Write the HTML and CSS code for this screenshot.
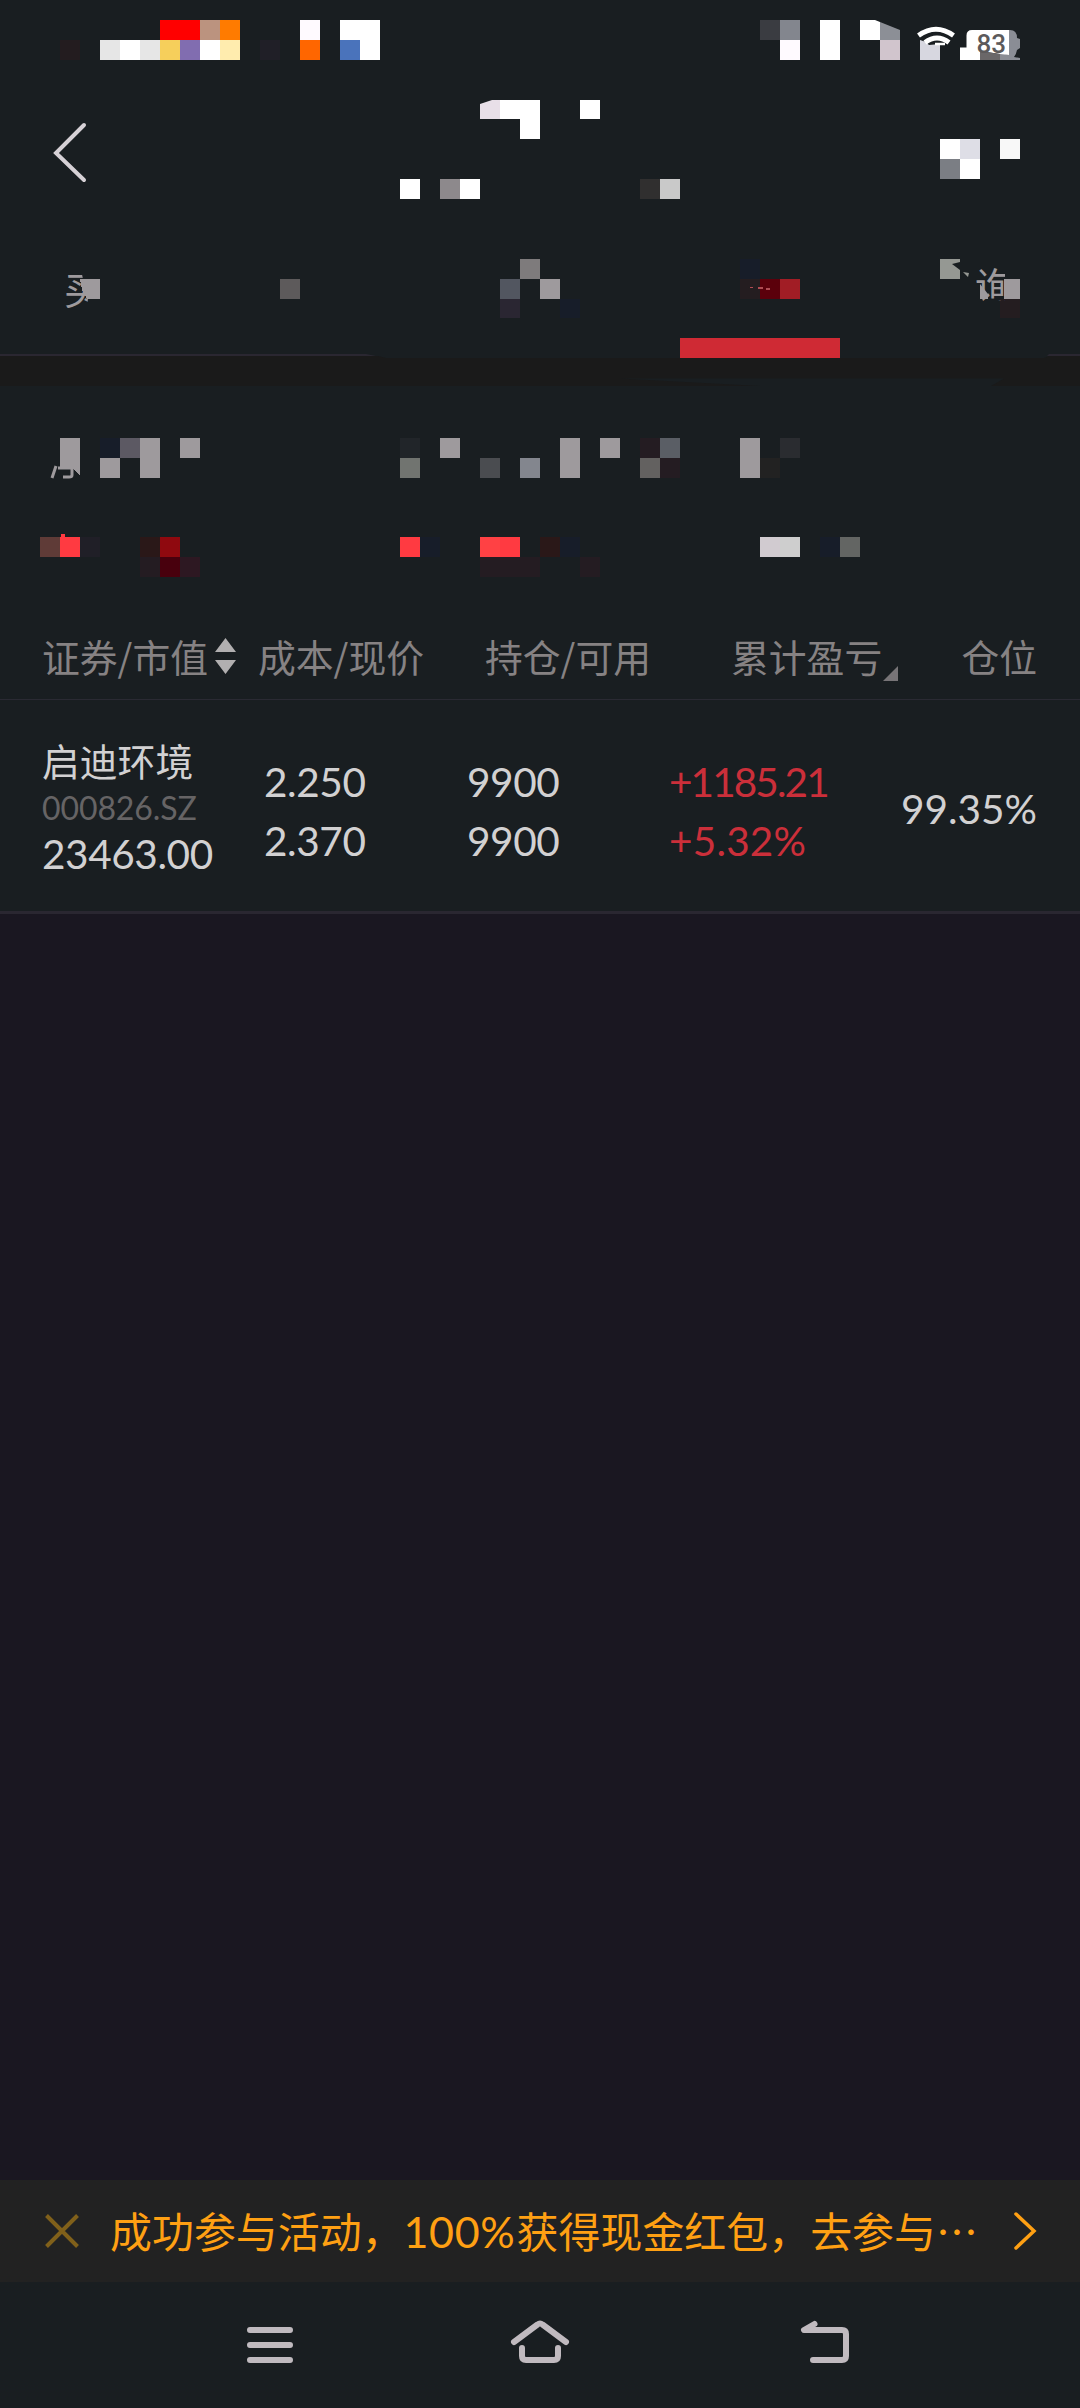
FILE: index.html
```html
<!DOCTYPE html>
<html lang="zh-CN">
<head>
<meta charset="utf-8">
<title>持仓</title>
<link rel="stylesheet" href="styles.css">
</head>
<body>
<div class="screen">
  <header class="status">
    <svg class="strip" width="1080" height="80" viewBox="0 0 1080 80" shape-rendering="crispEdges">
      <path fill="#f00" d="M160 20h40v20h-40z"/>
      <path fill="#bb937f" d="M200 20h20v20h-20z"/>
      <path fill="#ff7b00" d="M220 20h20v20h-20z"/>
      <path fill="#fffaff" d="M300 20h20v20h-20zM780 40h20v20h-20z"/>
      <path fill="#fff" d="M340 20h40v40h-20v-20h-20zM120 40h20v20h-20zM200 40h20v20h-20zM820 20h20v40h-20z"/>
      <path fill="#231c1f" d="M60 40h20v20h-20z"/>
      <path fill="#e6e6e6" d="M100 40h20v20h-20zM140 40h20v20h-20z"/>
      <path fill="#f6cf5b" d="M160 40h20v20h-20z"/>
      <path fill="#816db0" d="M180 40h20v20h-20z"/>
      <path fill="#ffecae" d="M220 40h20v20h-20z"/>
      <path fill="#201f27" d="M260 40h20v20h-20z"/>
      <path fill="#f60" d="M300 40h20v20h-20z"/>
      <path fill="#4a73bb" d="M340 40h20v20h-20z"/>
      <path fill="#3a3c41" d="M760 20h20v20h-20z"/>
      <path fill="#83868e" d="M780 20h20v20h-20z"/>
      <path fill="#d1c5cd" d="M880 40h20v20h-20z"/>
      <g shape-rendering="auto">
        <path fill="#fff" d="M860 20h15l5 2v18h-20z"/>
        <path fill="#8c8f96" d="M880 22l20 8v10h-20z"/>
        <path fill="#d7d7e0" d="M920 40l6 2 3 3 11-1v16h-20z"/>
        <path fill="none" stroke="#fff" stroke-width="5" d="M918.500 35.500Q936 23 953.500 35.500"/>
        <path fill="none" stroke="#fff" stroke-width="5" d="M925 42.500Q937 33.500 949 42.500"/>
        <path fill="none" stroke="#fff" stroke-width="2.500" d="M935 44h10"/>
        <path fill="#8a8d95" d="M1009 30h1q7 0 7 8l3 1v9l-3 2q-1 5-3 7l6 1v2h-20v-7l9 2z"/>
        <path fill="#fff" d="M972 30h37v25l-9-1-20-3v9h-20v-12.500h6.500V35.500q0-5.500 5.500-5.500z"/>
        <path fill="#6a6768" d="M980 51l20 3v6h-20z"/>
        <text class="battery" x="976.500" y="53">83</text>
      </g>
    </svg>
  </header>

  <div class="title">
    <svg class="strip" width="1080" height="159" viewBox="0 80 1080 159" shape-rendering="crispEdges">
      <path class="back" shape-rendering="auto" d="M84 125L56 153l28 27"/>
      <path fill="#e8dfe8" shape-rendering="auto" d="M480 104l12-4h8v19h-20z"/>
      <path fill="#fff" d="M500 100h40v39h-20v-20h-20zM580 100h20v19h-20zM400 179h20v20h-20zM460 179h20v20h-20zM940 139h20v20h-20zM960 159h20v20h-20z"/>
      <path fill="#8d898c" d="M440 179h20v20h-20z"/>
      <path fill="#302f2f" d="M640 179h20v20h-20z"/>
      <path fill="#c9c9c9" d="M660 179h20v20h-20z"/>
      <path fill="#dedee6" d="M960 139h20v20h-20z"/>
      <path fill="#f8f8f8" d="M1000 139h20v20h-20z"/>
      <path fill="#7b7e84" d="M940 159h20v20h-20z"/>
    </svg>
  </div>

  <nav class="tabs">
    <svg class="strip" width="1080" height="147" viewBox="0 239 1080 147" shape-rendering="crispEdges">
      <defs>
        <clipPath id="buy"><path d="M60 265h20l3 14 5 18-1 15H60z"/></clipPath>
        <clipPath id="query"><path d="M975 265h30v36h-22l-8-22z"/></clipPath>
      </defs>
      <g shape-rendering="auto">
        <path fill="#1a1a1a" d="M0 356h378l8 2h658l5-2h31v30H991l13-7.500H620L760 386H0z"/>
        <path fill="#2a2731" d="M0 354h366l10 2H0zM1049 354h31v2h-33z"/>
      </g>
      <path fill="#cf2a34" d="M680 338h160v20H680z"/>
      <path fill="#9e9a9d" d="M80 279h20v20h-13l-5-9zM540 279h20v20h-20zM1004 279h16v20h-16z"/>
      <path fill="#9e9a9d" shape-rendering="auto" d="M980 284l8 10v5h-8z"/>
      <path fill="#5d5a5b" d="M280 279h20v20h-20z"/>
      <path fill="#7e7b7c" d="M520 259h20v20h-20z"/>
      <path fill="#525660" d="M500 279h20v20h-20z"/>
      <path fill="#2a2632" d="M500 299h20v19h-20z"/>
      <path fill="#171d29" d="M560 299h20v19h-20zM740 259h20v20h-20z"/>
      <path fill="#241d20" d="M740 279h20v20h-20zM1000 299h20v19h-20z"/>
      <path fill="#5b000b" d="M760 279h20v20h-20z"/>
      <path fill="#a11d25" d="M780 279h20v20h-20z"/>
      <path fill="#b04b52" d="M750 287h3v1h-3zM758 287h5v2h-5zM766 288h4v2h-4z"/>
      <path fill="#959893" shape-rendering="auto" d="M940 259h20v3l-8 2 8 6v9h-20zM963 272l6 1-1 4z"/>
      <text class="tab-text" x="64" y="304" clip-path="url(#buy)">买</text>
      <text class="tab-text" x="975" y="300" clip-path="url(#query)">询</text>
    </svg>
  </nav>

  <section class="summary">
    <svg class="strip" width="1080" height="214" viewBox="0 386 1080 214" shape-rendering="crispEdges">
      <path fill="#9e9a9d" d="M60 438h20v38l-6-6-2-2h-12zM100 458h20v20h-20zM140 438h20v40h-20zM180 438h20v20h-20zM440 438h20v20h-20zM560 438h20v40h-20zM600 438h20v20h-20zM740 438h20v40h-20z"/>
      <path fill="none" stroke="#9e9a9d" stroke-width="3" shape-rendering="auto" d="M56 466l-4 12M58 468h14v7q0 2-3 2h-6"/>
      <path fill="#171d29" d="M100 438h20v20h-20zM420 537h20v20h-20zM560 537h20v20h-20zM820 537h20v20h-20z"/>
      <path fill="#5c5963" d="M120 438h20v20h-20z"/>
      <path fill="#212529" d="M400 438h20v20h-20z"/>
      <path fill="#717470" d="M400 458h20v20h-20z"/>
      <path fill="#4a4c50" d="M480 458h20v20h-20z"/>
      <path fill="#83868e" d="M520 458h20v20h-20z"/>
      <path fill="#241c22" d="M640 438h20v20h-20zM660 458h20v20h-20zM140 557h20v20h-20zM480 557h60v20h-60zM580 557h20v20h-20z"/>
      <path fill="#636160" d="M640 458h20v20h-20z"/>
      <path fill="#5a5e65" d="M660 438h20v20h-20z"/>
      <path fill="#222" d="M760 458h20v20h-20z"/>
      <path fill="#2a2c30" d="M780 438h20v20h-20z"/>
      <path fill="#5f3b37" d="M40 537h20v20h-20z"/>
      <path fill="#ff3a41" d="M60 537h1v-3h4v3h15v20h-20zM400 537h20v20h-20zM500 537h20v20h-20z"/>
      <path fill="#ff4144" d="M480 537h20v20h-20z"/>
      <path fill="#201f27" d="M80 537h20v20h-20z"/>
      <path fill="#2a1818" d="M140 537h20v20h-20zM540 537h20v20h-20z"/>
      <path fill="#8f090f" d="M160 537h20v20h-20z"/>
      <path fill="#48000d" d="M160 557h20v20h-20z"/>
      <path fill="#2d1822" d="M180 557h20v20h-20z"/>
      <path fill="#d1cbd0" d="M760 537h20v20h-20z"/>
      <path fill="#cecece" d="M780 537h20v20h-20z"/>
      <path fill="#636563" d="M840 537h20v20h-20z"/>
    </svg>
  </section>

  <section class="head">
    <div class="sortable">证券/市值
      <svg width="21" height="36" viewBox="0 0 21 36"><path fill="#b1afb0" d="M10.500 0L21 14H0zM0 22h21L10.500 36z"/></svg>
    </div>
    <div>成本/现价</div>
    <div>持仓/可用</div>
    <div class="dropdown">累计盈亏
      <svg width="15" height="15" viewBox="0 0 15 15"><path fill="#777477" d="M15 0v15H0z"/></svg>
    </div>
    <div class="right">仓位</div>
  </section>

  <section class="row">
    <div class="stock">
      <div class="name">启迪环境</div>
      <div class="code">000826.SZ</div>
      <div class="value">23463.00</div>
    </div>
    <div class="pair"><span>2.250</span><span>2.370</span></div>
    <div class="pair"><span>9900</span><span>9900</span></div>
    <div class="pair gain"><span class="profit">+1185.21</span><span class="rate">+5.32%</span></div>
    <div class="position">99.35%</div>
  </section>

  <main class="blank"></main>

  <section class="promo">
    <svg width="34" height="34" viewBox="0 0 34 34"><path class="close" d="M1.500 1.500l31 31M32.500 1.500l-31 31"/></svg>
    <p class="message">成功参与活动，<span class="hundred">100%</span>获得现金红包，去参与…</p>
    <svg width="24" height="38" viewBox="0 0 24 38"><path class="more" d="M3 2l18 17L3 36"/></svg>
  </section>

  <footer class="keys">
    <svg width="60" height="60" viewBox="240 2315 60 60"><path class="key" d="M250 2330h40M250 2345h40M250 2360h40"/></svg>
    <svg class="home" width="60" height="60" viewBox="510 2315 60 60"><path class="key" d="M514 2342L537.500 2324.500Q540 2322.500 542.500 2324.500L566 2342M522 2348v8q0 4 4 4h28q4 0 4-4v-8"/></svg>
    <svg width="60" height="60" viewBox="795 2315 60 60"><path class="key" d="M814.500 2324L804 2330h38q4 0 4 4v22q0 4-4 4h-29"/></svg>
  </footer>
</div>
</body>
</html>
```
FILE: styles.css
```css
* { box-sizing: border-box; }

body {
  margin: 0;
  background: #191e21;
  font-family: "Noto Sans CJK SC", sans-serif;
}

.screen {
  display: flex;
  flex-direction: column;
  width: 1080px;
  height: 2408px;
  overflow: hidden;
  background: #191e21;
}

.screen svg { display: block; flex: none; }

.status { height: 80px; }
.title { height: 159px; }
.tabs { height: 147px; }
.summary { height: 214px; }

.battery {
  font: 500 26px Roboto, sans-serif;
  fill: #5c5a5b;
}

.back {
  fill: none;
  stroke: #d6d1d6;
  stroke-width: 4;
  stroke-linecap: round;
}

.tab-text {
  font: 38px "Noto Sans CJK SC", sans-serif;
  fill: #9e9a9d;
}

.head {
  display: grid;
  grid-template-columns: 216px 227px 246px 1fr auto;
  align-items: center;
  height: 100px;
  padding: 12px 43px 0 42px;
  border-bottom: 1px solid #2a2a33;
  color: #868283;
  font-size: 37.8px;
  line-height: 56px;
  white-space: nowrap;
}

.sortable,
.dropdown {
  display: flex;
  align-items: center;
}

.sortable { gap: 7px; }
.dropdown { gap: 1px; }
.dropdown svg { margin-top: 36px; }

.row {
  display: grid;
  grid-template-columns: 222px 203px 202px 1fr auto;
  align-items: center;
  height: 214px;
  padding: 2px 43px 0 42px;
  border-bottom: 3px solid #2a2731;
  color: #d2d1d2;
  font: 40.5px/59px Lato, sans-serif;
  letter-spacing: -0.4px;
}

.name {
  font: 37.800px/46px "Noto Sans CJK SC", sans-serif;
  letter-spacing: 0;
}

.code {
  padding-top: 2px;
  color: #666465;
  font-size: 32px;
  line-height: 46px;
  letter-spacing: -0.1px;
}

.value { line-height: 46px; }

.pair {
  display: flex;
  flex-direction: column;
  padding-top: 8px;
}

.gain { color: #cb2f3a; }
.profit { letter-spacing: -1.9px; }
.rate { letter-spacing: 0.2px; }

.position {
  padding-top: 3px;
  letter-spacing: 0;
}

.blank {
  flex: 1;
  background: #1a1721;
}

.promo {
  display: flex;
  align-items: center;
  height: 102px;
  padding: 0 43px 0 45px;
  background: #222;
}

.message {
  flex: 1;
  margin: 0 0 0 31px;
  color: #ffa013;
  font-size: 41.95px;
  line-height: 62px;
  white-space: nowrap;
}

.hundred {
  display: inline-block;
  width: 113px;
  font-family: Lato, sans-serif;
  font-size: 43px;
  letter-spacing: 0.6px;
}

.close {
  fill: none;
  stroke: #80601a;
  stroke-width: 4;
}

.more {
  fill: none;
  stroke: #ffa013;
  stroke-width: 3.500;
  stroke-linecap: round;
}

.keys {
  display: flex;
  height: 126px;
  padding: 33px 225px 0 240px;
}

.home { margin: 0 225px 0 210px; }

.key {
  fill: none;
  stroke: #c0babf;
  stroke-width: 6;
  stroke-linecap: round;
  stroke-linejoin: round;
}
```
